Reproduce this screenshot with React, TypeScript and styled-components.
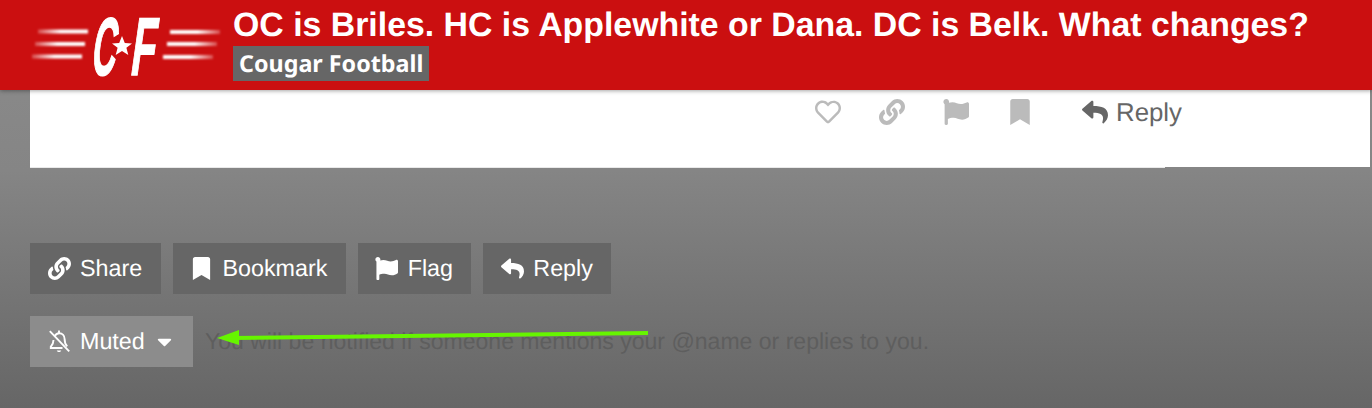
import * as React from 'react';
import styled, { createGlobalStyle } from 'styled-components';
import {
  FaBookmark,
  FaCaretDown,
  FaFlag,
  FaLink,
  FaRegHeart,
  FaReply,
} from 'react-icons/fa';

const GlobalStyle = createGlobalStyle`
  html, body {
    margin: 0;
    height: 100%;
    overflow: hidden;
  }

  body {
    font-family: "Liberation Sans", Arial, sans-serif;
    text-rendering: geometricPrecision;
    background: linear-gradient(#8c8c8c 0, #858585 170px, #666 408px);
  }
`;

const Page = styled.div`
  position: relative;
  height: 408px;
`;

const Header = styled.header`
  position: relative;
  z-index: 1;
  display: flex;
  align-items: flex-start;
  height: 90px;
  padding-left: 28px;
  box-sizing: border-box;
  background: #cb0f10;
  box-shadow: 0 1px 4px rgba(0, 0, 0, 0.35);
`;

const LogoBox = styled.div`
  flex: none;
  width: 205px;
  height: 90px;
`;

const TitleBox = styled.div`
  padding-top: 6px;
`;

const Title = styled.h1`
  margin: 0;
  color: #fff;
  font-size: 33.83px;
  line-height: 38px;
  font-weight: 700;
  white-space: nowrap;
`;

const Category = styled.span`
  display: inline-block;
  margin-top: 2px;
  padding: 0 6px;
  height: 35px;
  background: #666;
  color: #fff;
  font-family: "Noto Sans", sans-serif;
  font-size: 23.3px;
  line-height: 35px;
  font-weight: 700;
`;

const PostCard = styled.section`
  position: relative;
  display: flex;
  justify-content: flex-end;
  align-items: flex-start;
  height: 77px;
  margin: 0 2px 76px 30px;
  padding: 4px 188px 0 0;
  box-sizing: border-box;
  background: #fff;

  &::after {
    content: '';
    position: absolute;
    top: 100%;
    left: 0;
    width: 1135px;
    height: 1px;
    background: #e9e9e9;
  }
`;

const PostAction = styled.span`
  display: flex;
  align-items: center;
  justify-content: center;
  width: 64px;
  height: 36px;
  color: #bbb;
  font-size: 26px;
`;

const PostReply = styled.span`
  display: flex;
  align-items: center;
  gap: 8px;
  height: 36px;
  margin-left: 30px;
  color: #666;
  font-size: 25.8px;
  svg {
    font-size: 26px;
  }
`;

const ReplyLabel = styled.span`
  margin-top: 2px;
`;

const Controls = styled.div`
  padding-left: 30px;
`;

const ButtonRow = styled.div`
  display: flex;
  gap: 12px;
  margin-bottom: 22px;
`;

const Button = styled.button<{ $muted?: boolean }>`
  display: flex;
  align-items: center;
  gap: 9.4px;
  height: 51px;
  padding: 0 18.35px 0 17.6px;
  border: 0;
  background: ${(p) => (p.$muted ? '#8c8c8c' : '#666')};
  color: #fff;
  font-family: "Liberation Sans", Arial, sans-serif;
  font-size: 23.3px;
  text-rendering: geometricPrecision;
  svg {
    flex: none;
    font-size: 23px;
  }
`;

const Caret = styled(FaCaretDown)`
  margin: 0 -1px 0 -1.5px;
`;

const NotifyRow = styled.div`
  display: flex;
  align-items: center;
  gap: 12px;
`;

const NotifyText = styled.span`
  color: #5e5e5e;
  font-size: 23.04px;
`;

const Arrow = styled.svg`
  position: absolute;
  left: 0;
  top: 0;
  pointer-events: none;
`;

const MutedBell = () => (
  <svg width="1em" height="1em" viewBox="0 0 23 23" fill="none" stroke="#fff" strokeWidth="1.9">
    <path d="M11 0.5V3" />
    <path d="M6.5 6.5C7.5 4.3 9.2 3.2 11.2 3.2C14.4 3.2 16.6 5.8 16.6 9C16.6 12.2 17.2 14.3 19.2 16.4" />
    <path d="M5.5 10C5.4 13 4.6 15 2.8 16.7V18H14.5" />
    <path d="M8.8 20.6C9.6 22.6 12.4 22.6 13.2 20.6Z" fill="#fff" stroke="none" />
    <path d="M1.8 1.2L21.2 21.4" />
  </svg>
);

const Logo = () => (
  <svg width="205" height="100" viewBox="0 0 205 100">
    <defs>
      <filter id="soft" x="-10%" y="-100%" width="120%" height="300%">
        <feGaussianBlur stdDeviation="1 0.8" />
      </filter>
      <filter id="logoBlur" x="-10%" y="-10%" width="120%" height="120%">
        <feGaussianBlur stdDeviation="0.5" />
      </filter>
      <linearGradient id="fadeLeft">
        <stop offset="0" stopColor="#fff" stopOpacity="0.25" />
        <stop offset="0.45" stopColor="#fff" />
      </linearGradient>
      <linearGradient id="fadeRight">
        <stop offset="0.55" stopColor="#fff" />
        <stop offset="1" stopColor="#fff" stopOpacity="0.25" />
      </linearGradient>
    </defs>
    <g fill="url(#fadeLeft)" filter="url(#soft)">
      <rect x="10" y="29.5" width="50" height="4" />
      <rect x="7" y="42" width="50" height="4" />
      <rect x="4" y="54.5" width="50" height="4" />
    </g>
    <g fill="url(#fadeRight)" filter="url(#soft)">
      <rect x="142" y="30" width="50" height="4" />
      <rect x="139" y="42" width="50" height="4" />
      <rect x="135" y="55" width="50" height="4" />
    </g>
    <g
      fill="#fff"
      stroke="#fff"
      strokeWidth="1.6"
      filter="url(#logoBlur)"
      fontFamily="'Liberation Sans', sans-serif"
      fontWeight="700"
      fontSize="82"
    >
      <text
        textLength="24"
        lengthAdjust="spacingAndGlyphs"
        transform="translate(62 75) skewX(-8)"
      >
        C
      </text>
      <text
        textLength="24"
        lengthAdjust="spacingAndGlyphs"
        transform="translate(101 75) skewX(-8)"
      >
        F
      </text>
    </g>
    <polygon
      fill="#fff"
      points="94,36 96.8,43 104,43.4 98.4,47.8 100.3,55 94,51 87.7,55 89.6,47.8 84,43.4 91.2,43"
    />
  </svg>
);

export default function App() {
  return (
    <Page>
      <GlobalStyle />
      <Header>
        <LogoBox>
          <Logo />
        </LogoBox>
        <TitleBox>
          <Title>OC is Briles. HC is Applewhite or Dana. DC is Belk. What changes?</Title>
          <Category>Cougar Football</Category>
        </TitleBox>
      </Header>
      <PostCard>
        <PostAction><FaRegHeart /></PostAction>
        <PostAction><FaLink /></PostAction>
        <PostAction><FaFlag /></PostAction>
        <PostAction><FaBookmark /></PostAction>
        <PostReply><FaReply /><ReplyLabel>Reply</ReplyLabel></PostReply>
      </PostCard>
      <Controls>
        <ButtonRow>
          <Button><FaLink />Share</Button>
          <Button><FaBookmark />Bookmark</Button>
          <Button><FaFlag />Flag</Button>
          <Button><FaReply />Reply</Button>
        </ButtonRow>
        <NotifyRow>
          <Button $muted><MutedBell />Muted<Caret /></Button>
          <NotifyText>You will be notified if someone mentions your @name or replies to you.</NotifyText>
        </NotifyRow>
      </Controls>
      <Arrow width="1372" height="408" viewBox="0 0 1372 408">
        <line x1="648" y1="333" x2="232" y2="338" stroke="#66f500" strokeWidth="4" />
        <polygon fill="#66f500" points="217,338 239,330 239,345" />
      </Arrow>
    </Page>
  );
}
